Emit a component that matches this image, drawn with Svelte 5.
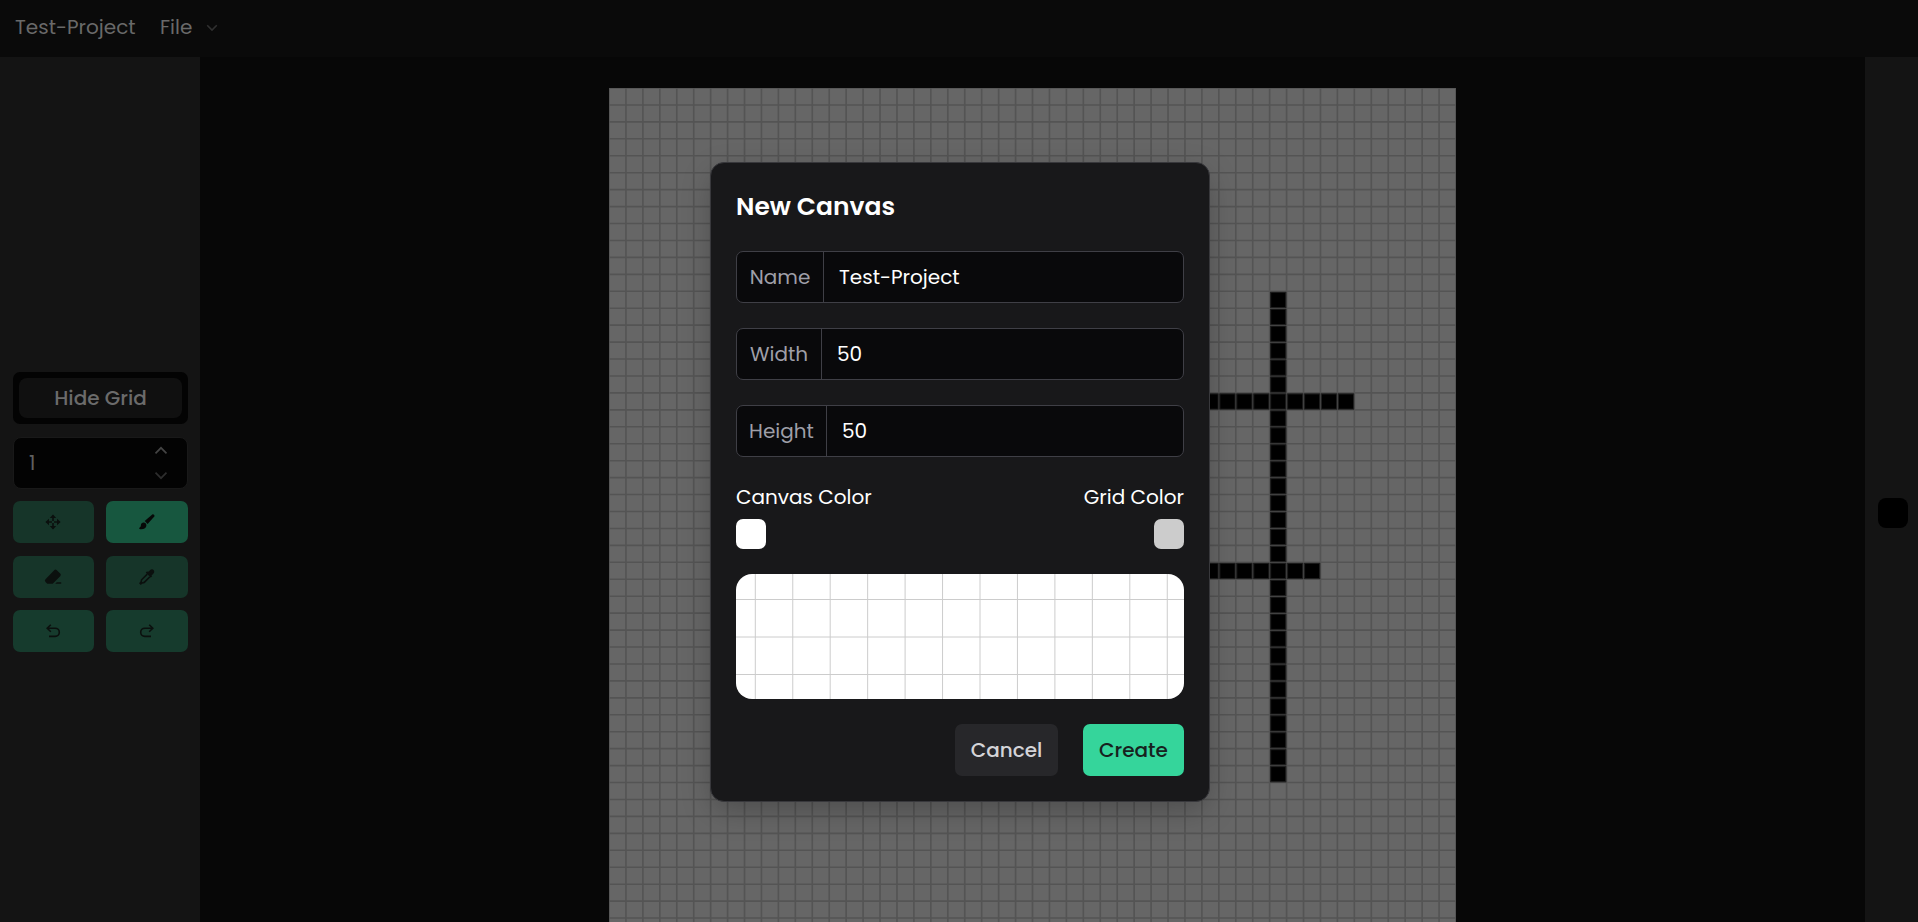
<script>
  const size = 50;
  const lines = Array.from({ length: size + 1 }, (_, i) => i);
  const inked = [];
  for (let y = 12; y <= 40; y++) inked.push([39, y]);
  for (let x = 22; x <= 43; x++) if (x !== 39) inked.push([x, 18]);
  for (let x = 20; x <= 41; x++) if (x !== 39) inked.push([x, 28]);

  let name = $state('Test-Project');
  let width = $state('50');
  let height = $state('50');
</script>

<div class="app">
  <header>
    <span class="project">Test-Project</span>
    <span class="file">File</span>
    <svg class="caret" width="12" height="8" viewBox="0 0 12 8"><path d="M1.2 1.2 6 6l4.8-4.8" /></svg>
  </header>

  <div class="body">
    <aside class="tools">
      <div class="toggle"><button class="hide">Hide Grid</button></div>
      <div class="stepper">
        <span>1</span>
        <div class="arrows">
          <svg width="14" height="9" viewBox="0 0 14 9"><path d="M1.5 7.3 7 1.8l5.5 5.5" /></svg>
          <svg class="down" width="14" height="9" viewBox="0 0 14 9"><path d="M1.5 1.7 7 7.2l5.5-5.5" /></svg>
        </div>
      </div>
      <div class="grid">
        <button class="tool" aria-label="Move">
          <svg viewBox="0 0 20 20"><path class="line" d="M3.6 10h12.8M10 3.8v12.4" /><path d="M2.4 10 6 6.7v6.6zM17.6 10 14 6.7v6.6zM10 2.6 6.8 6.1h6.4zM10 17.4l-3.2-3.5h6.4z" /><rect class="hole" x="9" y="9" width="2" height="2" /></svg>
        </button>
        <button class="tool active" aria-label="Brush">
          <svg viewBox="0 0 20 20"><path d="M15.3 2.4c1-.8 2.8.9 2 2L10.6 12 7.7 9.1z" /><path d="M6.6 10.4c1.7 0 2.8 1.1 2.8 2.8 0 2.6-2.4 4.2-5.9 4-1.4-.1-1.8-1.2-.8-1.7 1-.5 1.1-1 1.2-2.4.1-1.6 1.2-2.7 2.7-2.7z" /></svg>
        </button>
        <button class="tool" aria-label="Eraser">
          <svg viewBox="0 0 20 20"><path d="M11.2 3.2a1.8 1.8 0 0 1 2.6 0l3.4 3.4a1.8 1.8 0 0 1 0 2.6l-7.5 7.5H4.3l-1.8-1.8a1.8 1.8 0 0 1 0-2.6z" /><path d="m12.2 16.7 1.6-1.4h4.4v1.4z" /></svg>
        </button>
        <button class="tool" aria-label="Pick color">
          <svg viewBox="0 0 20 20"><path d="M12.7 3.5c1.2-1.2 2.8-1.6 3.9-.5s.7 2.7-.5 3.9l-1.6 1.6.7.7-1.4 1.4-.9-.8-3.3-3.3-.8-.9 1.4-1.4.7.7z" /><path class="line" d="M10.3 7.1 4.6 12.8l-.5 2.1-1 1.3.7.7 1.3-1 2.1-.5 5.7-5.7" /></svg>
        </button>
        <button class="tool history" aria-label="Undo">
          <svg viewBox="0 0 20 20"><path class="line" d="M7.8 3.7 4.2 7.2l3.6 3.5M4.5 7.2h7.7a4.1 4.1 0 0 1 0 8.2H6" /></svg>
        </button>
        <button class="tool history" aria-label="Redo">
          <svg viewBox="0 0 20 20"><path class="line" d="m12.2 3.7 3.6 3.5-3.6 3.5m3.3-3.5H7.8a4.1 4.1 0 0 0 0 8.2H14" /></svg>
        </button>
      </div>
    </aside>

    <main>
      <svg class="canvas" width="847" height="847" viewBox="0 0 50 50">
        <rect width="50" height="50" fill="#666" />
        {#each inked as [x, y]}
          <rect {x} {y} width="1" height="1" fill="#000" />
        {/each}
        <g stroke="#545454" stroke-width="0.095">
          {#each lines as n}
            <path d="M{n} 0V50M0 {n}H50" />
          {/each}
        </g>
        <g fill="none" stroke="#1f1f1f" stroke-width="0.06">
          {#each inked as [x, y]}
            <rect x={x + 0.06} y={y + 0.06} width="0.9" height="0.9" />
          {/each}
        </g>
      </svg>
    </main>

    <aside class="palette"><div class="current"></div></aside>
  </div>

  <div class="overlay">
    <form class="dialog">
      <h2>New Canvas</h2>
      <label class="field"><span class="key name">Name</span><input bind:value={name} /></label>
      <label class="field"><span class="key width">Width</span><input bind:value={width} /></label>
      <label class="field"><span class="key height">Height</span><input bind:value={height} /></label>
      <div class="colors">
        <div class="color"><span>Canvas Color</span><i class="swatch white"></i></div>
        <div class="color end"><span>Grid Color</span><i class="swatch gray"></i></div>
      </div>
      <svg class="preview" width="448" height="125" viewBox="0 0 448 125">
        <rect width="448" height="125" fill="#fff" />
        <g stroke="#ccc" stroke-width="1">
          {#each Array(12) as _, i}
            <path d="M{19.3 + i * 37.45} 0V125" />
          {/each}
          <path d="M0 25.5H448M0 63H448M0 100.5H448" />
        </g>
      </svg>
      <div class="actions">
        <button type="button" class="cancel">Cancel</button>
        <button type="button" class="create">Create</button>
      </div>
    </form>
  </div>
</div>

<style>
  :global(body) { background: #070707; overflow: hidden; }
  * { box-sizing: border-box; }
  .app {
    width: 100vw; height: 100vh; overflow: hidden; position: relative;
    display: flex; flex-direction: column; background: #070707;
    font-family: Poppins, Inter, sans-serif; font-size: 20px; line-height: 30px;
  }
  button, input { font: inherit; border: 0; margin: 0; padding: 0; }
  svg { display: block; flex: none; }
  header {
    height: 57px; flex: none; background: #0a0a0a; color: #696969;
    display: flex; align-items: center; padding: 0 0 3px 15px;
  }
  .project { width: 145px; }
  .file { width: 46px; }
  .caret { margin-top: 1px; }
  .caret path { fill: none; stroke: #303030; stroke-width: 1.6; }
  .body { flex: 1; min-height: 0; display: flex; }
  .tools {
    width: 200px; flex: none; background: #141414; padding: 315px 12px 0 13px;
    display: flex; flex-direction: column;
  }
  .toggle { height: 52px; flex: none; background: #030303; border-radius: 7px; padding: 6px; display: flex; }
  .hide { flex: 1; background: #101010; color: #6b6b6b; border-radius: 8px; font-weight: 500; }
  .stepper {
    height: 52px; flex: none; margin-top: 13px; background: #030303; border: 1px solid #191919;
    border-radius: 8px; color: #606060; display: flex; align-items: center;
    justify-content: space-between; padding: 0 19px 0 15px;
  }
  .arrows { display: flex; flex-direction: column; gap: 16px; }
  .arrows path { fill: none; stroke: #444; stroke-width: 1.7; }
  .arrows .down path { stroke: #2d2d2d; }
  .grid {
    margin-top: 12px; display: grid; grid-template-columns: 81px 82px;
    column-gap: 12px; row-gap: 12.5px;
  }
  .tool {
    height: 42px; border-radius: 7px; background: #163529; color: #0b100e;
    display: flex; align-items: center; justify-content: center; padding-right: 1px;
  }
  .tool svg { width: 20px; height: 20px; fill: currentColor; }
  .tool .line { fill: none; stroke: currentColor; stroke-width: 1.6; }
  .tool .hole { fill: #163529; }
  .active { background: #17573f; color: #060807; }
  .history { background: #163b2d; }
  main { flex: 1; min-width: 0; overflow: hidden; padding: 31px 0 0 409px; }
  .palette { width: 53px; flex: none; background: #141414; padding: 441px 0 0 13px; }
  .current { width: 30px; height: 30px; background: #000; border-radius: 8px; }
  .overlay { position: absolute; inset: 0; display: flex; justify-content: center; align-items: flex-start; padding: 162px 0 0 2px; }
  .dialog {
    width: 500px; height: 640px; background: #18181a; border: 1px solid #38383c; border-radius: 14px;
    padding: 24px 25px; color: #fff; display: flex; flex-direction: column;
    box-shadow: 0 10px 30px -2px rgba(0, 0, 0, 0.25);
  }
  h2 { margin: 0 0 25px; font-size: 25px; line-height: 39px; font-weight: 600; }
  .field {
    height: 52px; flex: none; margin-bottom: 25px; background: #09090b; border: 1px solid #3f3f46;
    border-radius: 7px; display: flex; overflow: hidden; align-items: stretch;
  }
  .key { color: #9f9fa8; display: flex; align-items: center; justify-content: center; border-right: 1px solid #3f3f46; flex: none; }
  .name { width: 87px; }
  .width { width: 85px; }
  .height { width: 90px; }
  input { flex: 1; min-width: 0; background: transparent; color: #fff; padding: 0 15px; outline: none; }
  .colors { display: flex; justify-content: space-between; height: 67px; flex: none; }
  .color { display: flex; flex-direction: column; gap: 7px; }
  .end { align-items: flex-end; }
  .swatch { width: 30px; height: 30px; border-radius: 7px; }
  .white { background: #fff; }
  .gray { background: #ccc; }
  .preview { margin-top: 25px; border-radius: 16px; }
  .actions { margin-top: 25px; display: flex; justify-content: flex-end; gap: 25px; }
  .actions button { height: 52px; border-radius: 7px; font-weight: 500; }
  .cancel { width: 103px; background: #27272a; color: #d4d4d8; }
  .actions .create { width: 101px; background: #35d59b; color: #17221e; }
</style>
